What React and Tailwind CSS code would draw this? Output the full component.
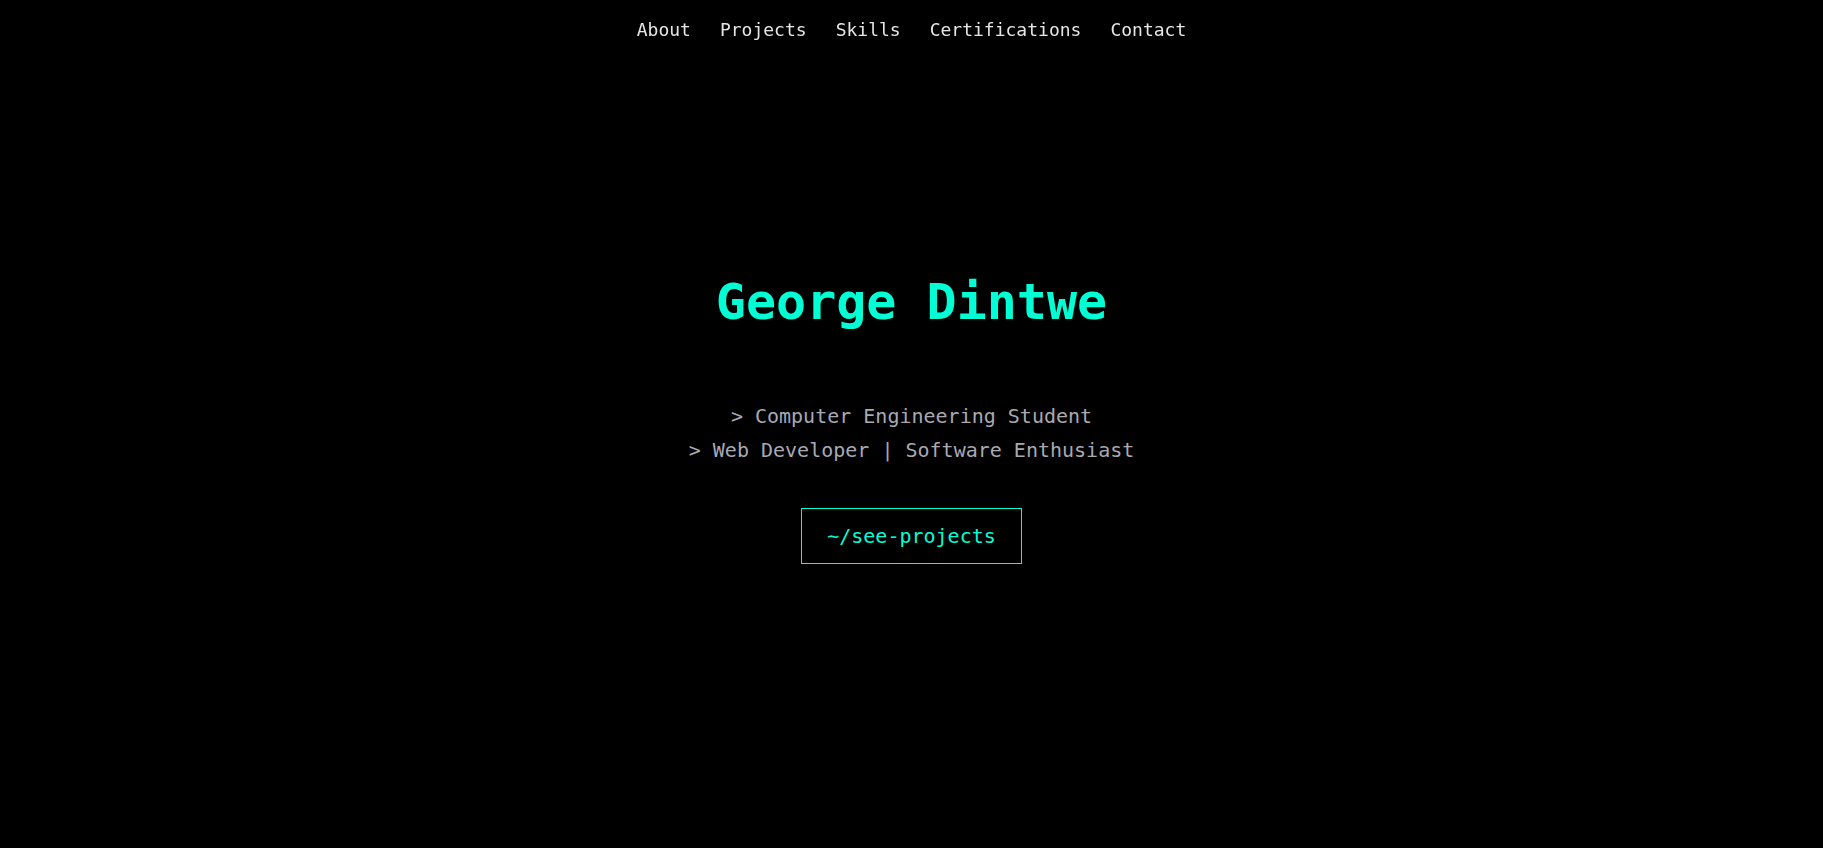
import React from "react"

const links = ["About", "Projects", "Skills", "Certifications", "Contact"]

function NavBar() {
  return (
    <nav className="fixed top-0 left-0 right-0 z-10 flex justify-center pt-[16px]">
      <ul className="flex gap-[29px] text-[18px] leading-[28px] font-medium text-[#e6e6e6]">
        {links.map((l) => (
          <li key={l}>
            <a href={`#${l.toLowerCase()}`} className="hover:text-[#00ffd5]">
              {l}
            </a>
          </li>
        ))}
      </ul>
    </nav>
  )
}

export default function App() {
  return (
    <div className="min-h-screen bg-black font-['DejaVu_Sans_Mono','Liberation_Mono',monospace]">
      <NavBar />

      {/* hero */}
      <section className="min-h-screen flex flex-col items-center justify-center text-center pb-[12px]">
        <h1 className="text-[50px] leading-[60px] font-bold text-[#00ffd5]">George Dintwe</h1>

        <div className="mt-[67px] text-[20px] leading-[34px] text-[#a9a9b3]">
          <p>&gt; Computer Engineering Student</p>
          <p>&gt; Web Developer | Software Enthusiast</p>
        </div>

        <a
          href="#projects"
          className="mt-[41px] border border-[#00ffd5] px-[25px] py-[13px] text-[20px] leading-[28px] text-[#00ffd5]"
        >
          ~/see-projects
        </a>
      </section>
    </div>
  )
}
